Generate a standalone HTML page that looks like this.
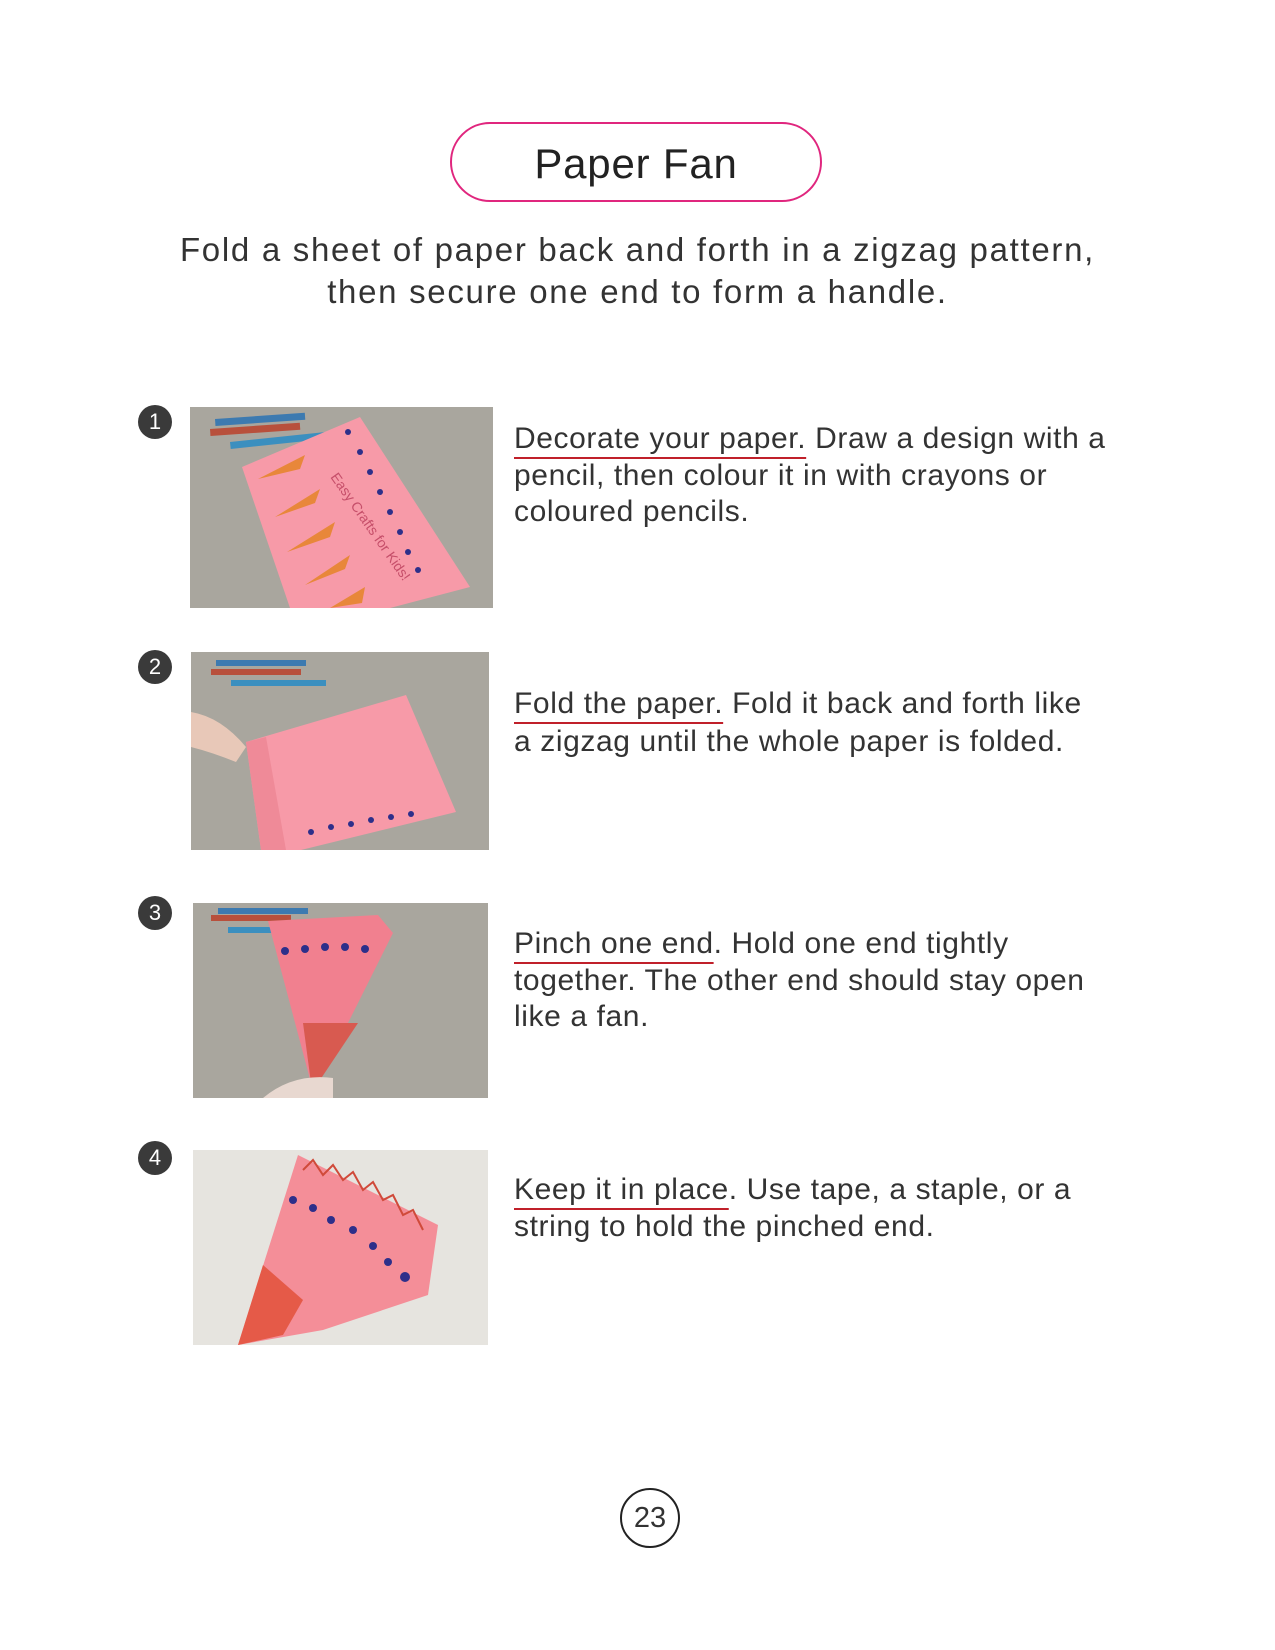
<!DOCTYPE html>
<html><head><meta charset="utf-8"><style>
body{margin:0;width:1275px;height:1650px;background:#fff;position:relative;font-family:"Liberation Sans","DejaVu Sans",sans-serif;color:#333;overflow:hidden}
.abs{position:absolute}
.title{left:450px;top:122px;width:372px;height:80px;border:2px solid #e0267e;border-radius:40px;box-sizing:border-box;text-align:center;font-size:42px;line-height:80px;color:#222;letter-spacing:0.8px}
.sub{left:0;width:1275px;top:229px;text-align:center;font-size:33px;line-height:42px;color:#333;letter-spacing:1.7px}
.num{width:34px;height:34px;border-radius:50%;background:#3a3a3a;color:#fff;font-size:22px;line-height:34px;text-align:center}
.txt{left:514px;font-size:30px;line-height:36.5px;width:640px;color:#333;letter-spacing:0.6px}
.u{text-decoration:underline;text-decoration-color:#c0202a;text-underline-offset:9px;text-decoration-thickness:2px}
.pg{left:620px;top:1488px;width:60px;height:60px;border:2px solid #222;border-radius:50%;box-sizing:border-box;text-align:center;font-size:29px;line-height:56px}
svg{position:absolute}
</style></head><body>
<div class="abs title">Paper Fan</div>
<div class="abs sub">Fold a sheet of paper back and forth in a zigzag pattern,<br>then secure one end to form a handle.</div>

<div class="abs num" style="left:138px;top:405px">1</div>
<div class="abs num" style="left:138px;top:650px">2</div>
<div class="abs num" style="left:138px;top:896px">3</div>
<div class="abs num" style="left:138px;top:1141px">4</div>

<svg style="left:190px;top:407px" width="303" height="201" viewBox="0 0 303 201">
<rect width="303" height="201" fill="#a9a69e"/>
<rect x="25" y="12" width="90" height="7" fill="#3d7ab0" transform="rotate(-4 25 12)"/>
<rect x="20" y="22" width="90" height="7" fill="#b8503c" transform="rotate(-4 20 22)"/>
<rect x="40" y="35" width="95" height="7" fill="#3b8fbf" transform="rotate(-6 40 35)"/>
<polygon points="52,60 170,10 280,180 200,201 100,201" fill="#f79aa8"/>
<g fill="#e8873a"><polygon points="68,72 115,48 110,62"/><polygon points="85,110 130,82 125,96"/><polygon points="97,145 145,115 140,130"/><polygon points="115,178 160,148 155,162"/><polygon points="140,201 175,180 172,196"/></g>
<g fill="#2d2f8a"><circle cx="158" cy="25" r="3"/><circle cx="170" cy="45" r="3"/><circle cx="180" cy="65" r="3"/><circle cx="190" cy="85" r="3"/><circle cx="200" cy="105" r="3"/><circle cx="210" cy="125" r="3"/><circle cx="218" cy="145" r="3"/><circle cx="228" cy="163" r="3"/></g>
<text x="140" y="70" fill="#c64f6a" font-size="14" transform="rotate(55 140 70)">Easy Crafts for Kids!</text>
</svg>

<svg style="left:191px;top:652px" width="298" height="198" viewBox="0 0 298 198">
<rect width="298" height="198" fill="#a9a69e"/>
<rect x="25" y="8" width="90" height="6" fill="#3d7ab0"/><rect x="20" y="17" width="90" height="6" fill="#b8503c"/><rect x="40" y="28" width="95" height="6" fill="#3b8fbf"/>
<polygon points="55,90 215,43 265,160 110,198 70,198" fill="#f79aa8"/>
<polygon points="55,90 75,85 95,198 70,198" fill="#ef8a98"/>
<path d="M0,60 Q30,65 55,95 L45,110 Q20,100 0,95Z" fill="#e8c8b8"/>
<g fill="#2d2f8a"><circle cx="120" cy="180" r="3"/><circle cx="140" cy="175" r="3"/><circle cx="160" cy="172" r="3"/><circle cx="180" cy="168" r="3"/><circle cx="200" cy="165" r="3"/><circle cx="220" cy="162" r="3"/></g>
</svg>

<svg style="left:193px;top:903px" width="295" height="195" viewBox="0 0 295 195">
<rect width="295" height="195" fill="#a9a69e"/>
<rect x="25" y="5" width="90" height="6" fill="#3d7ab0"/><rect x="18" y="12" width="80" height="6" fill="#b8503c"/><rect x="35" y="24" width="70" height="6" fill="#3b8fbf"/>
<polygon points="75,18 185,12 200,30 125,180 118,180" fill="#f1808f"/>
<polygon points="110,120 165,120 125,180 118,180" fill="#d85a50"/>
<g fill="#2d2f8a"><circle cx="92" cy="48" r="4"/><circle cx="112" cy="46" r="4"/><circle cx="132" cy="44" r="4"/><circle cx="152" cy="44" r="4"/><circle cx="172" cy="46" r="4"/></g>
<path d="M70,195 Q100,170 140,175 L140,195Z" fill="#e8d8d0"/>
</svg>

<svg style="left:193px;top:1150px" width="295" height="195" viewBox="0 0 295 195">
<rect width="295" height="195" fill="#e6e4df"/>
<polygon points="105,5 245,75 235,145 130,180 45,195" fill="#f48e98"/>
<polygon points="45,195 70,115 110,150 90,185" fill="#e55a48"/>
<g fill="#2d2f8a"><circle cx="100" cy="50" r="4"/><circle cx="120" cy="58" r="4"/><circle cx="138" cy="70" r="4"/><circle cx="160" cy="80" r="4"/><circle cx="180" cy="96" r="4"/><circle cx="195" cy="112" r="4"/><circle cx="212" cy="127" r="5"/></g>
<path d="M110,20 L120,10 L130,25 L140,15 L150,30 L160,22 L170,40 L180,32 L190,50 L200,45 L210,65 L220,60 L230,80" stroke="#d04a3a" fill="none" stroke-width="2"/>
</svg>

<div class="abs txt" style="top:421px"><span class="u">Decorate your paper.</span> Draw a design with a<br>pencil, then colour it in with crayons or<br>coloured pencils.</div>
<div class="abs txt" style="top:685px;line-height:38px"><span class="u">Fold the paper.</span> Fold it back and forth like<br>a zigzag until the whole paper is folded.</div>
<div class="abs txt" style="top:926px"><span class="u">Pinch one end</span>. Hold one end tightly<br>together. The other end should stay open<br>like a fan.</div>
<div class="abs txt" style="top:1172px"><span class="u">Keep it in place</span>. Use tape, a staple, or a<br>string to hold the pinched end.</div>

<div class="abs pg">23</div>
</body></html>
